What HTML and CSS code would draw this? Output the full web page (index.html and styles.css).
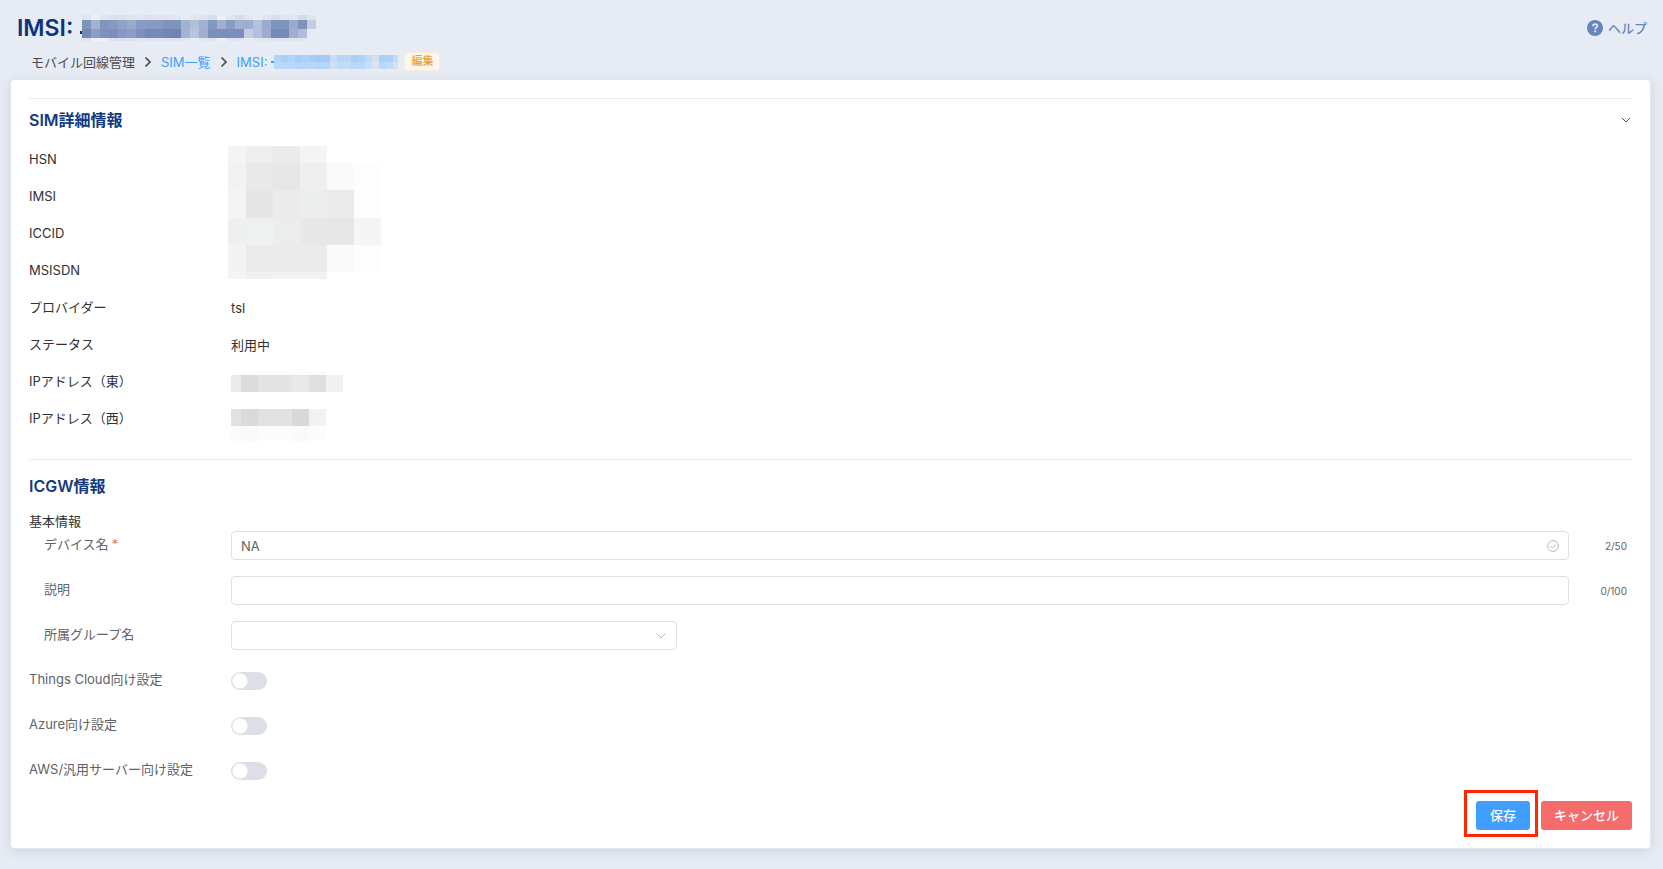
FILE: index.html
```html
<!DOCTYPE html>
<html lang="ja">
<head>
    <meta charset="utf-8">
    <title>SIM編集</title>
    <link rel="stylesheet" href="styles.css">
</head>
<body>

<header class="page-header">
    <div class="title-bar">
        <h1 class="page-title">IMSI: <svg class="mosaic title-mosaic" id="title-mosaic" width="238" height="26"></svg></h1>
        <a class="help" href="#">
            <svg width="16" height="16" viewBox="0 0 16 16">
                <circle cx="8" cy="8" r="8" fill="#6685bf"/>
                <path d="M5.9 6.2C5.9 4.9 6.8 4.1 8.1 4.1s2.2.8 2.2 1.9c0 1.6-2.1 1.6-2.1 3.2" fill="none" stroke="#e6ebf4" stroke-width="1.7"/>
                <circle cx="8.2" cy="11.3" r="1.1" fill="#e6ebf4"/>
            </svg>
            ヘルプ
        </a>
    </div>
    <nav class="breadcrumb">
        <span>モバイル回線管理</span>
        <svg class="separator" width="8" height="12" viewBox="0 0 8 12"><path d="M1.5 1.5L6 6l-4.5 4.5"/></svg>
        <a href="#">SIM一覧</a>
        <svg class="separator" width="8" height="12" viewBox="0 0 8 12"><path d="M1.5 1.5L6 6l-4.5 4.5"/></svg>
        <a class="current" href="#">IMSI: <svg class="mosaic" id="crumb-mosaic" width="127" height="18"></svg></a>
        <span class="tag">編集</span>
    </nav>
</header>

<main class="card">
    <section class="section">
        <div class="section-head">
            <h2>SIM詳細情報</h2>
            <button class="collapse" type="button" aria-label="折りたたむ">
                <svg width="12" height="12" viewBox="0 0 12 12"><path d="M2 4l4 4 4-4"/></svg>
            </button>
        </div>
        <div class="details">
            <dl class="detail-list">
                <dt>HSN</dt>
                <dd class="masked"><svg class="mosaic" id="id-mosaic" width="154" height="134"></svg></dd>
                <dt>IMSI</dt>
                <dt>ICCID</dt>
                <dt>MSISDN</dt>
                <dt>プロバイダー</dt>
                <dd>tsl</dd>
                <dt>ステータス</dt>
                <dd>利用中</dd>
                <dt>IPアドレス（東）</dt>
                <dd class="masked-ip"><svg class="mosaic" id="ip-mosaic" width="130" height="70"></svg></dd>
                <dt>IPアドレス（西）</dt>
            </dl>
        </div>
    </section>

    <section class="section">
        <div class="section-head form-head">
            <h2>ICGW情報</h2>
        </div>
        <form class="form">
            <h3>基本情報</h3>
            <div class="row">
                <label class="indent" for="device">デバイス名<span class="required">*</span></label>
                <div class="input-box">
                    <input id="device" type="text" value="NA">
                    <svg width="12" height="12" viewBox="0 0 12 12"><circle cx="6" cy="6" r="5.4"/><path d="M3.4 6.1l1.9 1.9 3.5-3.6"/></svg>
                </div>
                <span class="count">2/50</span>
            </div>
            <div class="row">
                <label class="indent" for="description">説明</label>
                <div class="input-box"><input id="description" type="text"></div>
                <span class="count">0/100</span>
            </div>
            <div class="row">
                <label class="indent" for="group">所属グループ名</label>
                <div class="select-area">
                    <div class="input-box">
                        <select id="group"><option></option></select>
                        <svg width="12" height="12" viewBox="0 0 12 12"><path d="M1.5 3.5L6 8l4.5-4.5"/></svg>
                    </div>
                </div>
            </div>
            <div class="row">
                <label for="things">Things Cloud向け設定</label>
                <input class="switch" id="things" type="checkbox" role="switch">
            </div>
            <div class="row">
                <label for="azure">Azure向け設定</label>
                <input class="switch" id="azure" type="checkbox" role="switch">
            </div>
            <div class="row last">
                <label for="aws">AWS/汎用サーバー向け設定</label>
                <input class="switch" id="aws" type="checkbox" role="switch">
            </div>
            <div class="actions">
                <span class="highlight"><button class="btn save" type="submit">保存</button></span>
                <button class="btn cancel" type="button">キャンセル</button>
            </div>
        </form>
    </section>
</main>

<script src="script.js"></script>
</body>
</html>
```
FILE: styles.css
```css
* {
    box-sizing: border-box;
}
body {
    margin: 0;
    padding: 12px 12px 20px 10px;
    background: #e6ebf4;
    color: #303133;
    font-family: Inter, "Noto Sans CJK JP", sans-serif;
    font-size: 13px;
    line-height: 20px;
}
h1, h2, h3, dl, dd {
    margin: 0;
}
a {
    color: #409eff;
    text-decoration: none;
}
svg {
    flex: none;
}
.mosaic {
    display: block;
    shape-rendering: crispEdges;
}

/* header */
.title-bar {
    display: flex;
    align-items: center;
    justify-content: space-between;
    height: 32px;
    padding: 0 4px 0 7px;
}
.page-title {
    display: flex;
    align-items: center;
    gap: 7px;
    color: #0c337c;
    font-size: 23px;
    font-weight: 600;
}
.help {
    display: flex;
    align-items: center;
    gap: 5px;
    color: #6685bf;
    font-weight: 500;
}
.breadcrumb {
    display: flex;
    align-items: center;
    height: 35px;
    padding-left: 21px;
    color: #484b52;
}
.separator {
    margin: 0 9px;
    fill: none;
    stroke: #484b52;
    stroke-width: 1.7;
}
.current {
    display: flex;
    align-items: center;
    gap: 4px;
}
.tag {
    margin-left: 6px;
    padding: 0 6px;
    border: 1px solid #faecd8;
    border-radius: 4px;
    background: #fdf6ec;
    color: #e6a23c;
    font-size: 11px;
    font-weight: 500;
    line-height: 17px;
}

/* card */
.card {
    padding: 18px;
    border: 1px solid #e2e6ee;
    border-radius: 4px;
    background: #fff;
    box-shadow: 0 2px 12px rgba(0, 0, 0, .1);
}
.section {
    border-top: 1px solid #e9ebf2;
}
.section-head {
    display: flex;
    align-items: center;
    justify-content: space-between;
    height: 42px;
}
.form-head {
    height: 51px;
}
.section-head h2 {
    color: #12397f;
    font-size: 16px;
    font-weight: 600;
}
.collapse {
    display: flex;
    padding: 0;
    border: 0;
    background: none;
}
.collapse svg {
    fill: none;
    stroke: #484b52;
}
.details {
    padding-bottom: 22px;
}
.detail-list {
    display: grid;
    grid-template-columns: 202px 1fr;
    grid-auto-rows: 37px;
    align-items: center;
}
.detail-list dt {
    grid-column: 1;
    padding-bottom: 2px;
}
.detail-list dd {
    grid-column: 2;
}
.detail-list .masked {
    grid-row: 1 / span 4;
    align-self: start;
    margin-left: -3px;
    padding-top: 5px;
}
.detail-list .masked-ip {
    grid-row: 7 / span 2;
    align-self: start;
    padding-top: 8px;
}

/* form */
.form {
    color: #606266;
}
.form h3 {
    color: #303133;
    font-size: 13px;
    font-weight: 400;
    line-height: 20px;
}
.row {
    display: grid;
    grid-template-columns: 202px 1fr 63px;
    align-items: center;
    min-height: 29px;
    margin-bottom: 16px;
}
.row.last {
    margin-bottom: 5px;
}
.row label {
    padding-bottom: 3px;
}
.row .indent {
    padding-left: 15px;
}
.required {
    margin-left: 3px;
    color: #f56c6c;
}
.input-box {
    display: flex;
    align-items: center;
    height: 29px;
    padding: 0 9px;
    border: 1px solid #dcdfe6;
    border-radius: 4px;
    background: #fff;
}
.input-box input,
.input-box select {
    flex: 1;
    min-width: 0;
    padding: 0;
    border: 0;
    outline: 0;
    appearance: none;
    background: none;
    color: #606266;
    font: inherit;
}
.input-box svg {
    fill: none;
    stroke: #b4b8c0;
}
.select-area {
    display: grid;
    grid-template-columns: 1fr 2fr;
}
.count {
    padding-right: 5px;
    font-size: 10px;
    text-align: right;
}
.switch {
    width: 36px;
    height: 18px;
    margin: 0;
    border-radius: 9px;
    appearance: none;
    background: radial-gradient(circle at 9px 9px, #fff 7px, transparent 8px) #dcdfe6;
}
.actions {
    display: flex;
    align-items: flex-start;
    justify-content: flex-end;
}
.btn {
    display: block;
    height: 29px;
    padding: 0 14px 2px;
    border: 0;
    border-radius: 3px;
    color: #fff;
    font: inherit;
    font-weight: 500;
}
.save {
    background: #409eff;
}
.cancel {
    margin: 11px 0 0 3px;
    padding: 0 13px 2px;
    background: #f56c6c;
}
.highlight {
    margin-bottom: -7px;
    padding: 8px 5px 4px 9px;
    border: 3px solid #ff2600;
}
```
FILE: script.js
```js
var NS = "http://www.w3.org/2000/svg";

// each row: [x, y, cell width, cell height, colors]
function drawMosaic(id, rows) {
    var svg = document.getElementById(id);
    rows.forEach(function(row) {
        row[4].split(" ").forEach(function(color, i) {
            if (color === "-") return;
            var rect = document.createElementNS(NS, "rect");
            rect.setAttribute("x", row[0] + i * row[2]);
            rect.setAttribute("y", row[1]);
            rect.setAttribute("width", row[2]);
            rect.setAttribute("height", row[3]);
            rect.setAttribute("fill", "#" + color);
            svg.appendChild(rect);
        });
    });
}

drawMosaic("title-mosaic", [
    [0, 16, 2, 3, "0c337c"],
    [2, 0, 9, 5, "dfe4ef ebeff6 e1e6f1 dce2ee dce2ee dfe4ef e1e6f1 dce2ee dfe4ef dfe4ef e1e6f1 e6ebf4 e1e6f1 dfe4ef d6ddeb eef2f8 e1e6f1 d6ddeb e1e6f1 e6ebf4 dfe4ef d9dfec dfe4ef e1e6f1 d2d9e8 dfe4ef"],
    [2, 5, 9, 9, "8094bd a4b1d0 8094bd 869bc2 8fa1c7 9aaaca 879bc3 8599c2 8599c2 7f93bd 7f93bd a4b2d2 b2bfd9 a2b0d1 8397c1 a0afd0 889cc4 a1b0d1 9fadd0 b5c0da 9aaacd 7f94bf 7f94bf 99a9cd 7f93bd c4cde1"],
    [2, 14, 9, 9, "7489b7 8a9dc5 7c91bf 7a8fbe 8799c3 8c9dc6 7c8fbd 7589b8 7489b8 7087b6 6d84b3 a5b3d3 b9c5de 9faed0 7c90bd 7a8fbb 7a8fbb 7a8fbb c4cde1 b5c1db 9dacd0 7389b8 7389b8 a0afd0 b0bcd8 -"],
    [2, 23, 9, 3, "dfe4ef eef2f8 eef2f8 dce2ee dce2ee dce2ee e1e6f1 dfe4ef dfe4ef dfe4ef dfe4ef e1e6f1 e6ebf4 e1e6f1 dfe4ef eef2f8 dfe4ef e1e6f1 e6ebf4 e1e6f1 e1e6f1 dfe4ef dfe4ef dfe4ef e1e6f1 -"]
]);

drawMosaic("crumb-mosaic", [
    [0, 8, 3, 2, "409eff"],
    [3, 2, 7, 7, "b3d3f7 a9cff9 b3d4f8 a6cdf9 b0d2f8 a6cdf9 a4cbf8 a4cbf8 c9dcf5 b6d4f7 bcd7f6 a9cff9 b0d2f8 c3daf6 d3e0f4 abd0f8 abd0f8"],
    [122, 2, 5, 7, "c5daf5"],
    [3, 9, 7, 7, "b9d8f9 b9d8f9 b9d8f9 b4d5f9 b7d6f8 b9d8f9 b4d5f9 b4d5f9 cddff6 c1daf7 c5dcf7 b9d8f9 b9d8f9 cbdef6 d9e3f3 b9d8f9 c1daf7"],
    [122, 9, 5, 7, "d6e2f4"]
]);

drawMosaic("id-mosaic", [
    [0, 0, 18, 17, "f4f4f4"],
    [18, 0, 27, 17, "eeeeee ebebeb f4f4f4"],
    [0, 17, 18, 27, "f2f2f2"],
    [18, 17, 27, 27, "e9e9e9 e7e7e7 efefef fafafa fdfdfd"],
    [0, 44, 18, 28, "f5f5f5"],
    [18, 44, 27, 28, "e6e6e6 ebebeb eceeed ebebeb fdfdfd"],
    [0, 72, 18, 27, "eef0ef"],
    [18, 72, 27, 27, "eff1f0 ebeded e8e8e8 e7e7e7 f5f5f5"],
    [0, 99, 18, 27, "f3f3f3"],
    [18, 99, 27, 27, "eaeaea ebebeb ebebeb fafafa fdfdfd"],
    [0, 126, 18, 7, "f4f4f4"],
    [18, 126, 27, 7, "f0f0f0 f2f2f2 f2f2f2"]
]);

drawMosaic("ip-mosaic", [
    [10, 0, 17, 4, "fcfcfc fcfcfc fcfcfc fcfcfc fcfcfc"],
    [0, 4, 10, 17, "ebebeb"],
    [10, 4, 17, 17, "dcdcdc e3e5e4 e4e4e4 e9e9e9 dfdfdf f0f2f1"],
    [0, 38, 10, 17, "e2e2e2"],
    [10, 38, 17, 17, "dadada e2e2e2 e2e2e2 d9d9d9 f2f2f2"],
    [0, 55, 10, 15, "fbfbfb"],
    [10, 55, 17, 15, "fafafa fcfcfc fcfcfc fafafa fcfcfc"]
]);
```
